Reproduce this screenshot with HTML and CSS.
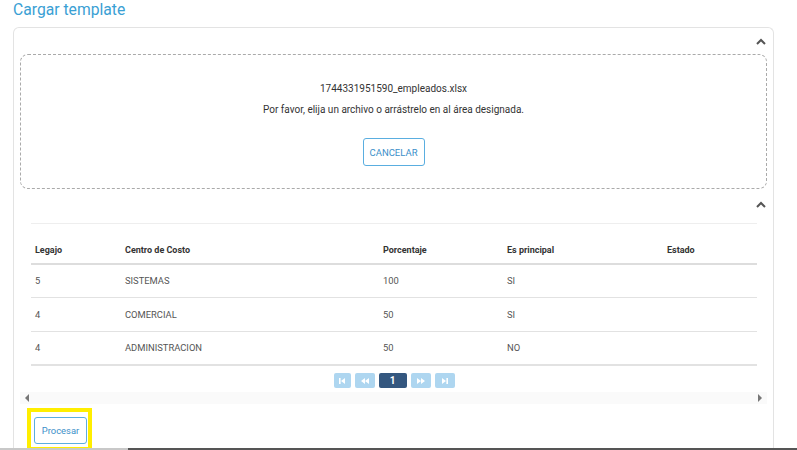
FILE: index.html
```html
<!DOCTYPE html>
<html lang="es">
<head>
<meta charset="utf-8">
<title>Cargar template</title>
<link rel="stylesheet" href="styles.css">
</head>
<body>
<div class="page">
  <h1 class="title">Cargar template</h1>
  <div class="card">
    <div class="section-head">
      <svg class="chev" width="10" height="7" viewBox="0 0 10 7"><path d="M1 6 L5 2 L9 6" fill="none" stroke="#555" stroke-width="2"/></svg>
    </div>
    <div class="dropzone">
      <div class="fname">1744331951590_empleados.xlsx</div>
      <div class="hint">Por favor, elija un archivo o arrástrelo en al área designada.</div>
      <button class="btn btn-cancel">CANCELAR</button>
    </div>
    <div class="section-head second">
      <svg class="chev" width="10" height="7" viewBox="0 0 10 7"><path d="M1 6 L5 2 L9 6" fill="none" stroke="#555" stroke-width="2"/></svg>
    </div>
    <div class="table-wrap">
      <table class="grid">
        <thead>
          <tr><th class="c1">Legajo</th><th class="c2">Centro de Costo</th><th class="c3">Porcentaje</th><th class="c4">Es principal</th><th class="c5">Estado</th></tr>
        </thead>
        <tbody>
          <tr><td>5</td><td>SISTEMAS</td><td>100</td><td>SI</td><td></td></tr>
          <tr><td>4</td><td>COMERCIAL</td><td>50</td><td>SI</td><td></td></tr>
          <tr><td>4</td><td>ADMINISTRACION</td><td>50</td><td>NO</td><td></td></tr>
        </tbody>
      </table>
      <div class="pager">
        <span class="pg pg-first"><svg width="8" height="8" viewBox="0 0 8 8"><rect x="1" y="1" width="1.6" height="6" fill="#fff"/><path d="M7 1 L3 4 L7 7 Z" fill="#fff"/></svg></span>
        <span class="pg pg-prev"><svg width="10" height="8" viewBox="0 0 10 8"><path d="M5 1 L1 4 L5 7 Z M9 1 L5 4 L9 7 Z" fill="#fff"/></svg></span>
        <span class="pg pg-cur">1</span>
        <span class="pg pg-next"><svg width="10" height="8" viewBox="0 0 10 8"><path d="M1 1 L5 4 L1 7 Z M5 1 L9 4 L5 7 Z" fill="#fff"/></svg></span>
        <span class="pg pg-last"><svg width="8" height="8" viewBox="0 0 8 8"><path d="M1 1 L5 4 L1 7 Z" fill="#fff"/><rect x="5.4" y="1" width="1.6" height="6" fill="#fff"/></svg></span>
      </div>
    </div>
    <div class="hscroll">
      <svg width="5" height="8" viewBox="0 0 5 8"><path d="M4 0 L0 4 L4 8 Z" fill="#777"/></svg>
      <svg width="5" height="8" viewBox="0 0 5 8"><path d="M0 0 L4 4 L0 8 Z" fill="#777"/></svg>
    </div>
    <div class="actions">
      <div class="highlight"><button class="btn btn-proc">Procesar</button></div>
    </div>
  </div>
</div>
<div class="bottom-bar"><span class="bb-light"></span><span class="bb-dark"></span></div>
</body>
</html>
```
FILE: styles.css
```css
html, body {
  margin: 0;
  padding: 0;
  background: #fff;
  font-family: Roboto, "Liberation Sans", Arial, sans-serif;
  color: #444;
  overflow: hidden;
  height: 450px;
}
.page {
  padding: 0 23px 0 13px;
}
.title {
  margin: 0;
  font-size: 15.7px;
  font-weight: 400;
  line-height: 19px;
  color: #3aa0d4;
  height: 27px;
}
.card {
  border: 1px solid #e3e3e3;
  border-bottom: none;
  border-radius: 6px 6px 0 0;
  padding: 0 6px;
  height: 430px;
  box-sizing: border-box;
}
.section-head {
  height: 26px;
  display: flex;
  justify-content: flex-end;
  align-items: center;
  padding-right: 1px;
}
.section-head.second {
  height: 30px;
}
.chev { display: block; }
.dropzone {
  border: 1px dashed #aaa;
  border-radius: 8px;
  height: 135px;
  box-sizing: border-box;
  display: flex;
  flex-direction: column;
  align-items: center;
  padding-top: 27px;
}
.fname {
  font-size: 10px;
  line-height: 14px;
  color: #333;
}
.hint {
  font-size: 10px;
  line-height: 14px;
  color: #333;
  margin-top: 7px;
}
.btn {
  font-family: Roboto, "Liberation Sans", Arial, sans-serif;
  background: #fff;
  border: 1px solid #5aaee0;
  border-radius: 3px;
  color: #3b8fc9;
  font-size: 9.5px;
  cursor: pointer;
}
.btn-cancel {
  margin-top: 21px;
  width: 62px;
  height: 28px;
  padding: 0;
}
.table-wrap {
  padding: 4px 10px 0 11px;
}
.grid {
  width: 100%;
  border-collapse: collapse;
  font-size: 9.4px;
  border-top: 1px solid #eee;
}
.grid th {
  text-align: left;
  font-weight: 700;
  font-size: 9px;
  color: #333;
  height: 40px;
  padding: 14px 4px 0;
  box-sizing: border-box;
  border-bottom: 2px solid #ddd;
}
.grid td {
  height: 32.5px;
  padding: 0 4px;
  color: #555;
  border-bottom: 1px solid #e2e2e2;
}
.grid tbody tr:last-child td { border-bottom: 2px solid #e2e2e2; }
.c1 { width: 90px; }
.c2 { width: 258px; }
.c3 { width: 124px; }
.c4 { width: 160px; }
.pager {
  display: flex;
  justify-content: center;
  gap: 4px;
  padding: 7px 0 4px;
}
.pg {
  height: 15px;
  border-radius: 2px;
  background: #aed6f0;
  display: flex;
  align-items: center;
  justify-content: center;
}
.pg-first { width: 17px; }
.pg-prev { width: 20px; }
.pg-cur {
  width: 28px;
  background: #34577f;
  color: #fff;
  font-size: 10px;
  font-weight: 700;
}
.pg-next { width: 20px; }
.pg-last { width: 20px; }
.hscroll {
  height: 12px;
  background: #fafafa;
  display: flex;
  justify-content: space-between;
  align-items: center;
  padding: 0 4px 0 5px;
}
.hscroll svg { display: block; }
.actions {
  padding: 4px 0 0 7px;
}
.highlight {
  display: inline-block;
  border: 4px solid #ffee00;
  padding: 5px 1px 3px 3px;
}
.btn-proc {
  width: 53px;
  height: 27px;
  padding: 0;
  font-size: 9.4px;
}
.bottom-bar {
  position: fixed;
  left: 0;
  right: 0;
  bottom: 0;
  height: 2px;
  display: flex;
}
.bb-light { width: 128px; background: #c8c8c8; }
.bb-dark { flex: 1; background: #555; }
```
